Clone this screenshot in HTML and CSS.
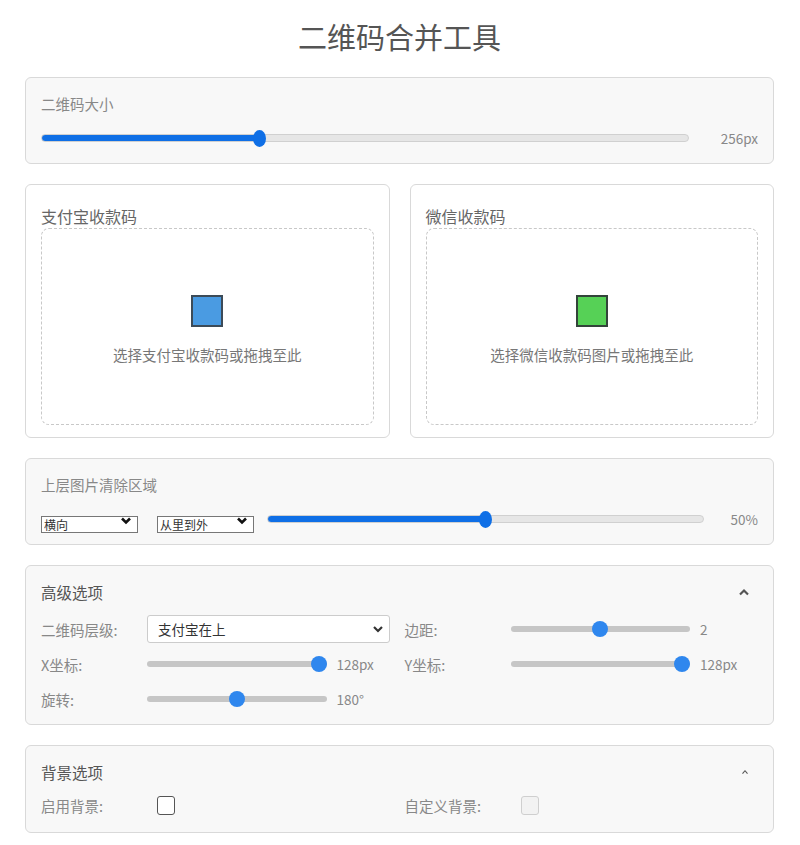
FILE: index.html
```html
<!DOCTYPE html>
<html lang="zh-CN">
<head>
  <meta charset="UTF-8">
  <title>二维码合并工具</title>
  <link rel="stylesheet" href="styles.css">
</head>
<body>
  <h1>二维码合并工具</h1>

  <div class="card">
    <div class="label">二维码大小</div>
    <div class="slider-row">
      <input type="range" class="range-main" min="64" max="640" value="256" style="--p: 33.7%">
      <span class="value value-wide">256px</span>
    </div>
  </div>

  <div class="uploads">
    <div class="card upload-card">
      <div class="upload-title">支付宝收款码</div>
      <div class="dropzone">
        <span class="swatch swatch-blue"></span>
        <span class="drop-text">选择支付宝收款码或拖拽至此</span>
      </div>
    </div>
    <div class="card upload-card">
      <div class="upload-title">微信收款码</div>
      <div class="dropzone">
        <span class="swatch swatch-green"></span>
        <span class="drop-text">选择微信收款码图片或拖拽至此</span>
      </div>
    </div>
  </div>

  <div class="card">
    <div class="label">上层图片清除区域</div>
    <div class="slider-row">
      <div class="mini-select">
        <select><option>横向</option><option>纵向</option></select>
        <svg viewBox="0 0 12 9"><polyline points="2,2.5 6,6.5 10,2.5"/></svg>
      </div>
      <div class="mini-select">
        <select><option>从里到外</option><option>从外到里</option></select>
        <svg viewBox="0 0 12 9"><polyline points="2,2.5 6,6.5 10,2.5"/></svg>
      </div>
      <input type="range" class="range-main" min="0" max="100" value="50" style="--p: 50%">
      <span class="value value-narrow">50%</span>
    </div>
  </div>

  <div class="card card-options">
    <div class="section-head">
      <span class="section-title">高级选项</span>
      <svg class="chevron chevron-bold" viewBox="0 0 12 8"><polyline points="2,6.5 6,2.5 10,6.5"/></svg>
    </div>
    <div class="grid">
      <span class="opt-label">二维码层级:</span>
      <div class="big-select">
        <select><option>支付宝在上</option><option>微信在上</option></select>
        <svg viewBox="0 0 12 8"><polyline points="2,2 6,6 10,2"/></svg>
      </div>
      <span class="opt-label">边距:</span>
      <div class="opt-slider">
        <input type="range" class="range-opt" min="0" max="4" value="2">
        <span class="value">2</span>
      </div>

      <span class="opt-label">X坐标:</span>
      <div class="opt-slider">
        <input type="range" class="range-opt" min="0" max="128" value="128">
        <span class="value">128px</span>
      </div>
      <span class="opt-label">Y坐标:</span>
      <div class="opt-slider">
        <input type="range" class="range-opt" min="0" max="128" value="128">
        <span class="value">128px</span>
      </div>

      <span class="opt-label">旋转:</span>
      <div class="opt-slider">
        <input type="range" class="range-opt" min="0" max="360" value="180">
        <span class="value">180°</span>
      </div>
    </div>
  </div>

  <div class="card card-bg">
    <div class="section-head">
      <span class="section-title">背景选项</span>
      <svg class="chevron chevron-thin" viewBox="0 0 12 8"><polyline points="3,6 6,2.5 9,6"/></svg>
    </div>
    <div class="grid grid-bg">
      <span class="opt-label">启用背景:</span>
      <span class="check-cell"><input type="checkbox" class="check"></span>
      <span class="opt-label">自定义背景:</span>
      <span class="check-cell"><input type="checkbox" class="check" disabled></span>
    </div>
  </div>
</body>
</html>
```

FILE: styles.css
```css
body { margin: 0; padding: 16px 26px 12px 25px; background: #fff; color: #666; font-family: "Noto Sans CJK SC", "Noto Sans", sans-serif; }
h1 { margin: 0 0 21px; font-size: 29px; font-weight: 400; line-height: 40px; color: #555; text-align: center; }

.card { background: #f8f8f8; border: 1px solid #d9d9d9; border-radius: 6px; padding: 16px 15px 15px; margin-bottom: 20px; }
.label { font-size: 14.5px; line-height: 20px; color: #888; margin-bottom: 14px; }
.slider-row { display: flex; align-items: center; height: 20px; }
.value { font-size: 13.5px; color: #888; white-space: nowrap; }
.value-wide { width: 69px; text-align: right; }
.value-narrow { width: 54px; text-align: right; }

input[type=range] { -webkit-appearance: none; appearance: none; margin: 0; }
input.range-main { flex: 1; height: 8px; border-radius: 4px; border: 1px solid #d0d0d0; box-sizing: border-box; background: linear-gradient(to right, #0f6fe6 var(--p), #e6e6e6 var(--p)); }
input.range-main::-webkit-slider-thumb { -webkit-appearance: none; width: 13px; height: 17px; border-radius: 50%; background: #0f6fe6; }

.uploads { display: flex; gap: 20px; }
.upload-card { flex: 1; background: #fff; padding: 19px 15px 12px; }
.upload-title { font-size: 16px; line-height: 24px; color: #666; }
.dropzone { box-sizing: border-box; height: 197px; border: 1px dashed #c8c8c8; border-radius: 8px; display: flex; flex-direction: column; align-items: center; justify-content: center; gap: 17px; padding-top: 6px; }
.swatch { width: 28px; height: 28px; border: 2px solid #3c4b58; }
.swatch-blue { background: #4a9be2; }
.swatch-green { background: #56d156; border-color: #33443a; }
.drop-text { font-size: 14.5px; color: #777; }

.mini-select { position: relative; width: 97px; height: 17px; margin-right: 19px; }
.mini-select:nth-child(2) { margin-right: 13px; }
.mini-select select { -webkit-appearance: none; appearance: none; width: 100%; height: 17px; padding: 0 0 0 2px; border: 1px solid #777; border-radius: 0; background: #fff; font-family: inherit; font-size: 12px; line-height: 15px; color: #333; }
.mini-select svg { position: absolute; right: 6px; top: 5px; width: 12px; height: 9px; fill: none; stroke: #111; stroke-width: 2.6; pointer-events: none; }

.card-options { padding-bottom: 11px; }
.card-bg { padding-bottom: 17px; }
.section-head { display: flex; align-items: center; justify-content: space-between; height: 20px; margin-bottom: 13px; }
.section-title { font-size: 15.5px; color: #555; }
.chevron { width: 12px; height: 8px; margin-right: 8px; fill: none; stroke: #555; }
.chevron-bold { stroke-width: 2.2; }
.chevron-thin { stroke-width: 1.3; width: 10px; }

.grid { display: grid; grid-template-columns: 96px 1fr 96px 1fr; grid-auto-rows: 28px; column-gap: 10px; row-gap: 7px; align-items: center; }
.opt-label { font-size: 14.5px; color: #888; }
.big-select { position: relative; width: 243px; }
.big-select select { -webkit-appearance: none; appearance: none; width: 100%; height: 28px; padding: 0 10px; border: 1px solid #ccc; border-radius: 3px; background: #fff; font-family: inherit; font-size: 13.5px; color: #333; }
.big-select svg { position: absolute; right: 6px; top: 10px; width: 12px; height: 8px; fill: none; stroke: #333; stroke-width: 2.2; pointer-events: none; }

.opt-slider { display: flex; align-items: center; gap: 10px; }
.opt-slider .value { width: 58px; }
input.range-opt { flex: 1; min-width: 0; height: 6px; border-radius: 3px; background: #c6c6c6; }
input.range-opt::-webkit-slider-thumb { -webkit-appearance: none; width: 16px; height: 16px; border-radius: 50%; background: #2f87ee; }

.grid-bg { grid-auto-rows: 20px; }
.check-cell { display: flex; align-items: center; }
.check { -webkit-appearance: none; appearance: none; margin: 0 0 0 10px; width: 18px; height: 19px; border: 1px solid #555; border-radius: 3px; background: #fff; }
.check:disabled { border-color: #cfcfcf; background: #f2f2f2; }
```
